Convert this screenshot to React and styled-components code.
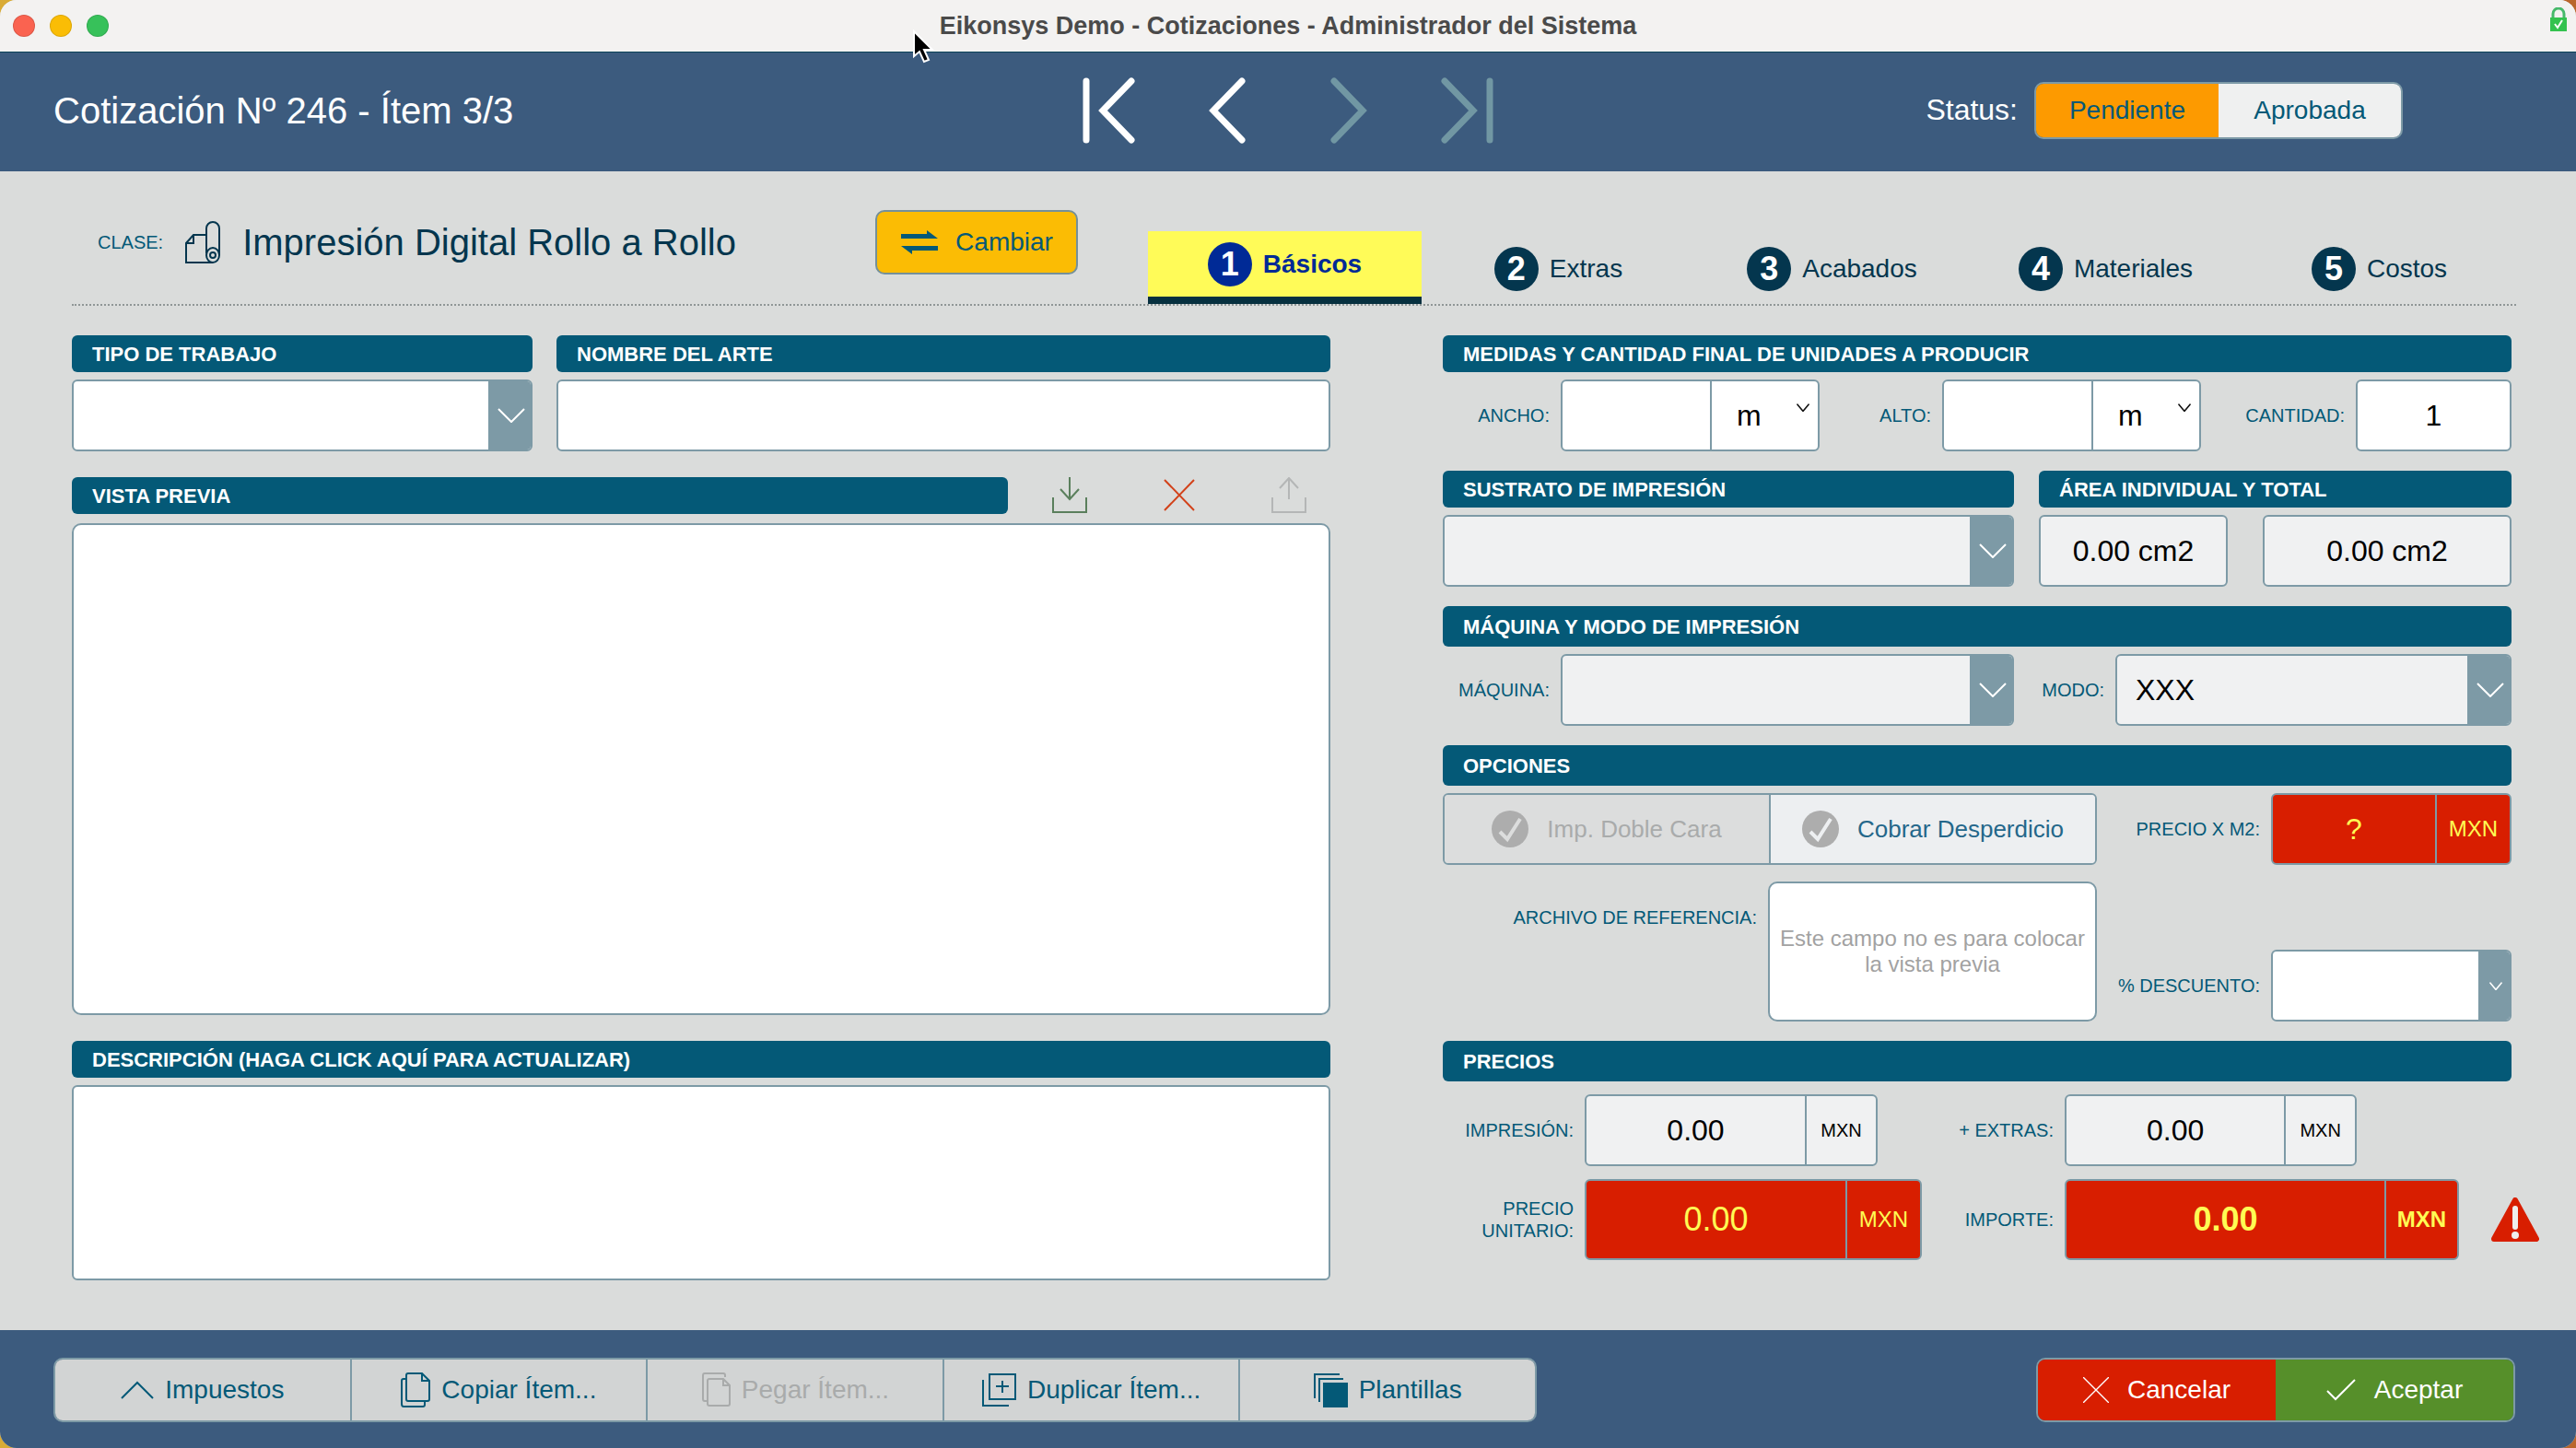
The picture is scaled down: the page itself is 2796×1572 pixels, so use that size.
import React from "react";
import styled, { createGlobalStyle, css } from "styled-components";

const c = {
  navy: "#3c5b7e",
  teal: "#045977",
  ink: "#04364e",
  edge: "#7d9aa6",
  panel: "#dadcdb",
  soft: "#f0f1f2",
  red: "#d81e00",
  lemon: "#fffb54",
  mute: "#a9abab",
};

const GlobalStyle = createGlobalStyle`
  *, *::before, *::after { box-sizing: border-box; }
  body { margin: 0; background: linear-gradient(90deg, #d9ab35, #b9662c); }
  body, button, input, select, textarea {
    font-family: "Liberation Sans", Arial, Helvetica, sans-serif;
  }
  button { padding: 0; cursor: pointer; }
  h1, h2 { margin: 0; font-weight: 400; }
`;

const Window = styled.div`
  display: flex;
  flex-direction: column;
  min-height: 100vh;
  border-radius: 18px;
  overflow: hidden;
  background: ${c.panel};
  color: ${c.teal};
`;

/* ---- Title bar ---- */
const TitleBar = styled.header`
  display: grid;
  grid-template-columns: 1fr auto 1fr;
  align-items: center;
  height: 57px;
  padding: 0 10px;
  background: #f3f2f1;
  border-bottom: 1px solid #0b4257;
`;
const Lights = styled.div`
  display: flex;
  gap: 16px;
  padding-left: 4px;
`;
const Light = styled.button`
  width: 24px;
  height: 24px;
  border: 1px solid rgba(0, 0, 0, 0.12);
  border-radius: 50%;
  background: ${(p) => p.$color};
`;
const WindowTitle = styled.h1`
  font-size: 27px;
  font-weight: 700;
  line-height: 32px;
  color: #4a4a4a;
`;
const Lock = styled.svg`
  justify-self: end;
  align-self: start;
  margin-top: 8px;
`;
const Pointer = styled.svg`
  position: absolute;
  left: 990px;
  top: 32px;
`;

/* ---- Record header ---- */
const RecordBar = styled.div`
  display: grid;
  grid-template-columns: 1fr auto 1fr;
  align-items: center;
  height: 129px;
  padding: 0 188px 4px 58px;
  background: ${c.navy};
  color: #fff;
`;
const RecordTitle = styled.h2`
  font-size: 40px;
  line-height: 48px;
`;
const Pager = styled.nav`
  display: flex;
  align-items: center;
  gap: 70px;
  padding-left: 130px;
`;
const PagerButton = styled.button`
  display: flex;
  justify-content: center;
  width: 60px;
  border: 0;
  background: none;
  color: ${(p) => (p.disabled ? "#7197a3" : "#fff")};
`;
const Status = styled.div`
  display: flex;
  align-items: center;
  justify-content: flex-end;
  gap: 18px;
  font-size: 32px;
`;
const Segments = styled.div`
  display: flex;
  border: 2px solid ${c.edge};
  border-radius: ${(p) => p.$radius || 10}px;
  overflow: hidden;
  flex: ${(p) => p.$flex || "none"};
`;
const Segment = styled.button`
  display: flex;
  flex: ${(p) => p.$flex || "1 1 0"};
  align-items: center;
  justify-content: center;
  gap: ${(p) => p.$gap || 12}px;
  width: ${(p) => (p.$width ? p.$width + "px" : "auto")};
  height: ${(p) => p.$height}px;
  border: 0;
  font-size: ${(p) => p.$size || 28}px;
  white-space: nowrap;
  background: ${(p) => p.$bg};
  color: ${(p) => p.$color || c.teal};
  &:not(:first-child) {
    border-left: ${(p) => (p.$divider ? `2px solid ${c.edge}` : "0")};
  }
`;

/* ---- Class row and tabs ---- */
const Main = styled.main`
  display: flex;
  flex: 1;
  flex-direction: column;
  padding: 0 65px 54px 78px;
`;
const ClassRow = styled.div`
  display: grid;
  grid-template-columns: 1168fr 1485fr;
  align-items: end;
  height: 146px;
  border-bottom: 2px dotted #8f9696;
`;
const ClassInfo = styled.div`
  display: flex;
  align-items: center;
  height: 70px;
  margin-bottom: 32px;
  padding: 0 76px 0 28px;
`;
const ClassLabel = styled.span`
  font-size: 20px;
`;
const ClassIcon = styled.svg`
  margin: 0 24px;
`;
const ClassName = styled.h2`
  font-size: 40px;
  line-height: 48px;
  color: ${c.ink};
  white-space: nowrap;
`;
const ChangeButton = styled.button`
  display: flex;
  align-items: center;
  justify-content: center;
  gap: 18px;
  width: 220px;
  height: 70px;
  margin-left: auto;
  border: 2px solid #74909a;
  border-radius: 10px;
  background: #fbbc04;
  color: ${c.teal};
  font-size: 28px;
`;
const Tabs = styled.nav`
  display: flex;
`;
const Tab = styled.button`
  display: flex;
  flex: 1 1 0;
  align-items: center;
  justify-content: center;
  gap: 12px;
  height: ${(p) => (p.$active ? 79 : 76)}px;
  align-self: flex-end;
  border: 0;
  border-bottom: ${(p) => (p.$active ? `8px solid #06303f` : "0")};
  background: ${(p) => (p.$active ? "#fffb58" : "none")};
  color: ${(p) => (p.$active ? "#002a96" : c.ink)};
  font-size: 28px;
  font-weight: ${(p) => (p.$active ? 700 : 400)};
`;
const Step = styled.span`
  width: 48px;
  height: 48px;
  border-radius: 50%;
  background: ${(p) => (p.$active ? "#002a96" : c.ink)};
  color: #fff;
  font-size: 36px;
  font-weight: 700;
  line-height: 48px;
  text-align: center;
`;

/* ---- Form ---- */
const Form = styled.form`
  display: grid;
  flex: 1;
  grid-template-columns: 1366fr 1160fr;
  column-gap: 122px;
  padding: 32px 5px 0 0;
`;
const Column = styled.div`
  display: flex;
  flex-direction: column;
  min-width: 0;
  gap: ${(p) => p.$gap}px;
`;
const Block = styled.section`
  display: flex;
  flex-direction: column;
  gap: ${(p) => p.$gap || 8}px;
  flex: ${(p) => p.$flex || "none"};
  min-width: 0;
`;
const Row = styled.div`
  display: grid;
  grid-template-columns: ${(p) => p.$cols};
  column-gap: ${(p) => p.$gap || 0}px;
  margin-right: ${(p) => p.$outdent ? "-30px" : "0"};
`;
const Heading = styled.label`
  display: block;
  padding: 2px 22px 0;
  border-radius: 6px;
  background: ${c.teal};
  color: #fff;
  font-size: 22px;
  font-weight: 700;
  line-height: ${(p) => (p.$tall ? 42 : 38)}px;
  white-space: nowrap;
`;
const Label = styled.label`
  display: flex;
  align-items: center;
  justify-content: flex-end;
  align-self: ${(p) => p.$align || "center"};
  height: 78px;
  padding-right: 12px;
  font-size: 20px;
  line-height: 24px;
  text-align: right;
`;
const tones = {
  white: css`background: #fff; color: #000;`,
  soft: css`background: ${c.soft}; color: #000;`,
  red: css`background: ${c.red}; color: ${c.lemon};`,
};
const Box = styled.div`
  display: grid;
  grid-template-columns: ${(p) => p.$cols || "minmax(0, 1fr)"};
  align-self: ${(p) => p.$align || "stretch"};
  height: ${(p) => p.$height || 78}px;
  border: 2px solid ${c.edge};
  border-radius: 6px;
  overflow: hidden;
  ${(p) => tones[p.$tone || "white"]}
`;
const Input = styled.input`
  width: 100%;
  min-width: 0;
  padding: 0 20px;
  border: 0;
  background: transparent;
  color: inherit;
  font-size: ${(p) => p.$size || 32}px;
  font-weight: ${(p) => (p.$bold ? 700 : 400)};
  text-align: center;
`;
const Unit = styled.span`
  display: flex;
  align-items: center;
  justify-content: center;
  border-left: 2px solid ${c.edge};
  font-size: ${(p) => p.$size || 20}px;
  font-weight: ${(p) => (p.$bold ? 700 : 400)};
`;
const Select = styled.select`
  grid-area: 1 / 1 / 2 / -1;
  min-width: 0;
  padding: 0 20px;
  border: 0;
  background: transparent;
  color: inherit;
  appearance: none;
  font-size: 32px;
`;
const Arrow = styled.span`
  display: flex;
  grid-area: 1 / 2 / 2 / 3;
  align-items: center;
  justify-content: center;
  padding-left: 4px;
  background: ${c.edge};
  color: #fff;
  pointer-events: none;
`;
const UnitPicker = styled.div`
  display: grid;
  grid-template-columns: minmax(0, 1fr) 23px;
  border-left: 2px solid ${c.edge};
  select { padding-left: 27px; }
  svg {
    grid-area: 1 / 2 / 2 / 3;
    margin-top: 24px;
    pointer-events: none;
  }
`;
const Area = styled.textarea`
  flex: ${(p) => p.$flex || "none"};
  height: ${(p) => (p.$height ? p.$height + "px" : "auto")};
  min-height: 200px;
  padding: 20px;
  border: 2px solid ${c.edge};
  border-radius: ${(p) => p.$radius}px;
  background: #fff;
  font-size: 32px;
  resize: none;
`;
const PreviewBar = styled.div`
  display: grid;
  grid-template-columns: 1016fr 350fr;
`;
const PreviewTools = styled.div`
  display: flex;
  justify-content: space-between;
  padding: 0 26px 0 48px;
`;
const Tool = styled.button`
  width: 38px;
  height: 40px;
  border: 0;
  background: none;
  color: ${(p) => p.$color};
`;
const DropZone = styled.button`
  height: 152px;
  border: 2px solid ${c.edge};
  border-radius: 10px;
  background: #fff;
  color: #a2a2a2;
  font-size: 24px;
  line-height: 28px;
`;
const Warning = styled.svg`
  align-self: center;
  justify-self: end;
`;

/* ---- Footer ---- */
const Footer = styled.footer`
  display: flex;
  align-items: center;
  justify-content: space-between;
  height: 128px;
  padding: 2px 66px 0 58px;
  background: ${c.navy};
`;

const Chevron = ({ small, dark }) => (
  <svg width={small ? 14 : 30} height={small ? 9 : 16} viewBox="0 0 30 16" preserveAspectRatio="none" fill="none"
    stroke={dark ? "#111" : "currentColor"} strokeWidth={small ? 3 : 2}>
    <path d="M1 1 15 15 29 1" />
  </svg>
);

const PagerIcon = ({ bar, flip }) => (
  <svg width="60" height="74" viewBox="0 0 60 74" fill="none" stroke="currentColor" strokeWidth="7"
    strokeLinecap="round" transform={flip ? "scale(-1 1)" : undefined}>
    {bar && <path d="M6 5V69" />}
    <path d={bar ? "M55 5 24 37 55 69" : "M45 5 14 37 45 69"} />
  </svg>
);

const CheckDisc = ({ mark }) => (
  <svg width="40" height="40" viewBox="0 0 40 40" fill="none" aria-hidden="true">
    <circle cx="20" cy="20" r="20" fill="#adadad" />
    <path d="M9 23 17 31 31 9" stroke={mark} strokeWidth="4" />
  </svg>
);

const Pages = ({ paste }) => (
  <svg width="32" height="38" viewBox="0 0 32 38" fill="none" stroke="currentColor" strokeWidth="2" aria-hidden="true">
    {paste ? (
      <>
        <path d="M6 31H4Q2 31 2 29V3Q2 1 4 1H24Q26 1 26 3V5" />
        <path d="M24 7H9Q7 7 7 9V34Q7 36 9 36H29Q31 36 31 34V14Z M24 7V14H31" />
      </>
    ) : (
      <>
        <path d="M23 1H8Q6 1 6 3V29Q6 31 8 31H29Q31 31 31 29V9Z M23 1V9H31" />
        <path d="M6 7H3Q1 7 1 9V34Q1 37 3 37H24Q26 37 26 35V31" />
      </>
    )}
  </svg>
);

const PickList = ({ id, tone, value, narrow, align, label }) => (
  <Box $tone={tone} $align={align} $cols={`minmax(0, 1fr) ${narrow ? 34 : 46}px`}>
    <Select id={id} aria-label={label} defaultValue={value || ""}>
      <option value={value || ""}>{value || ""}</option>
    </Select>
    <Arrow><Chevron small={narrow} /></Arrow>
  </Box>
);

const Measure = ({ id, label }) => (
  <Box $cols="minmax(0, 160fr) minmax(0, 117fr)">
    <Input id={id} />
    <UnitPicker>
      <Select aria-label={`Unidad de ${label}`} defaultValue="m"><option>m</option></Select>
      <Chevron small dark />
    </UnitPicker>
  </Box>
);

const Money = ({ id, value, tone = "soft", cols, height, size, unitSize, bold }) => (
  <Box $tone={tone} $cols={cols} $height={height}>
    <Input id={id} readOnly defaultValue={value} $size={size} $bold={bold} />
    <Unit $size={unitSize} $bold={bold}>MXN</Unit>
  </Box>
);

const tabs = ["Básicos", "Extras", "Acabados", "Materiales", "Costos"];

export default function App() {
  return (
    <Window>
      <GlobalStyle />
      <TitleBar>
        <Lights>
          <Light $color="#fa6350" aria-label="Cerrar" />
          <Light $color="#fabd05" aria-label="Minimizar" />
          <Light $color="#37c15a" aria-label="Ampliar" />
        </Lights>
        <WindowTitle>Eikonsys Demo - Cotizaciones - Administrador del Sistema</WindowTitle>
        <Lock width="18" height="26" viewBox="0 0 18 26" fill="none" aria-hidden="true">
          <path d="M3 12V7a6 6 0 0 1 12 0v5" stroke="#46b96a" strokeWidth="3" />
          <path d="M0 11H18V26H0Z" fill="#34c24f" />
          <path d="M5 18 8 22 13 14" stroke="#fff" strokeWidth="2" />
        </Lock>
      </TitleBar>

      <RecordBar>
        <RecordTitle>Cotización Nº 246 - Ítem 3/3</RecordTitle>
        <Pager>
          <PagerButton aria-label="Primero"><PagerIcon bar /></PagerButton>
          <PagerButton aria-label="Anterior"><PagerIcon /></PagerButton>
          <PagerButton aria-label="Siguiente" disabled><PagerIcon flip /></PagerButton>
          <PagerButton aria-label="Último" disabled><PagerIcon bar flip /></PagerButton>
        </Pager>
        <Status>
          <span>Status:</span>
          <Segments>
            <Segment $width={198} $flex="none" $height={58} $bg="#fd9a00">Pendiente</Segment>
            <Segment $width={198} $flex="none" $height={58} $bg="#eff0f0">Aprobada</Segment>
          </Segments>
        </Status>
      </RecordBar>

      <Main>
        <ClassRow>
          <ClassInfo>
            <ClassLabel>CLASE:</ClassLabel>
            <ClassIcon width="38" height="46" viewBox="0 0 38 46" fill="none" stroke={c.ink} strokeWidth="2" aria-hidden="true">
              <path d="M23 15H9L1 24V45H30" />
              <path d="M9 15V24H1" />
              <path d="M23 35V8a7 7 0 0 1 14 0V37" />
              <ellipse cx="30" cy="37" rx="7" ry="8" />
              <ellipse cx="30" cy="37" rx="3" ry="3" />
            </ClassIcon>
            <ClassName>Impresión Digital Rollo a Rollo</ClassName>
            <ChangeButton>
              <svg width="42" height="28" viewBox="0 0 42 28" fill={c.teal} aria-hidden="true">
                <path d="M1 5H29V1L41 10H1Z" />
                <path d="M41 23H13V27L1 18H41Z" />
              </svg>
              Cambiar
            </ChangeButton>
          </ClassInfo>
          <Tabs>
            {tabs.map((name, i) => (
              <Tab key={name} $active={i === 0}>
                <Step $active={i === 0}>{i + 1}</Step>
                {name}
              </Tab>
            ))}
          </Tabs>
        </ClassRow>

        <Form onSubmit={(e) => e.preventDefault()}>
          <Column $gap={28}>
            <Row $cols="500fr 840fr" $gap={26}>
              <Block>
                <Heading htmlFor="tipo">TIPO DE TRABAJO</Heading>
                <PickList id="tipo" />
              </Block>
              <Block>
                <Heading htmlFor="arte">NOMBRE DEL ARTE</Heading>
                <Box><Input id="arte" /></Box>
              </Block>
            </Row>
            <Block $gap={10} $flex="1">
              <PreviewBar>
                <Heading htmlFor="vista">VISTA PREVIA</Heading>
                <PreviewTools>
                  <Tool type="button" aria-label="Importar" $color="#5a7f5c">
                    <svg width="38" height="40" viewBox="0 0 38 40" fill="none" stroke="currentColor" strokeWidth="2">
                      <path d="M19 0V24M9 13 19 24 29 13" />
                      <path d="M1 22V38H37V22" />
                    </svg>
                  </Tool>
                  <Tool type="button" aria-label="Borrar" $color="#d2421a">
                    <svg width="38" height="40" viewBox="0 0 38 40" fill="none" stroke="currentColor" strokeWidth="2">
                      <path d="M3 3 35 36M35 3 3 36" />
                    </svg>
                  </Tool>
                  <Tool type="button" aria-label="Exportar" $color="#b4b6b6">
                    <svg width="38" height="40" viewBox="0 0 38 40" fill="none" stroke="currentColor" strokeWidth="2">
                      <path d="M19 24V1M9 12 19 1 29 12" />
                      <path d="M1 22V38H37V22" />
                    </svg>
                  </Tool>
                </PreviewTools>
              </PreviewBar>
              <Area id="vista" $flex="1" $radius={10} />
            </Block>
            <Block>
              <Heading htmlFor="descripcion">DESCRIPCIÓN (HAGA CLICK AQUÍ PARA ACTUALIZAR)</Heading>
              <Area id="descripcion" $height={212} $radius={6} />
            </Block>
          </Column>

          <Column $gap={21}>
            <Block>
              <Heading as="h2">MEDIDAS Y CANTIDAD FINAL DE UNIDADES A PRODUCIR</Heading>
              <Row $cols="128px 281fr 133px 281fr 168px 169fr">
                <Label htmlFor="ancho">ANCHO:</Label>
                <Measure id="ancho" label="ancho" />
                <Label htmlFor="alto">ALTO:</Label>
                <Measure id="alto" label="alto" />
                <Label htmlFor="cantidad">CANTIDAD:</Label>
                <Box><Input id="cantidad" defaultValue="1" /></Box>
              </Row>
            </Block>
            <Row $cols="620fr 513fr" $gap={27}>
              <Block>
                <Heading htmlFor="sustrato">SUSTRATO DE IMPRESIÓN</Heading>
                <PickList id="sustrato" tone="soft" />
              </Block>
              <Block>
                <Heading as="h2">ÁREA INDIVIDUAL Y TOTAL</Heading>
                <Row $cols="205fr 270fr" $gap={38}>
                  <Box $tone="soft"><Input aria-label="Área individual" readOnly defaultValue="0.00 cm2" /></Box>
                  <Box $tone="soft"><Input aria-label="Área total" readOnly defaultValue="0.00 cm2" /></Box>
                </Row>
              </Block>
            </Row>
            <Block>
              <Heading as="h2" $tall>MÁQUINA Y MODO DE IMPRESIÓN</Heading>
              <Row $cols="128px 492fr 110px 430fr">
                <Label htmlFor="maquina">MÁQUINA:</Label>
                <PickList id="maquina" tone="soft" />
                <Label htmlFor="modo">MODO:</Label>
                <PickList id="modo" tone="soft" value="XXX" />
              </Row>
            </Block>
            <Block $gap={18}>
              <Block>
                <Heading as="h2" $tall>OPCIONES</Heading>
                <Row $cols="710fr 189px 261fr">
                  <Segments $radius={6}>
                    <Segment type="button" disabled $height={74} $size={26} $gap={20} $bg="#dcdddd" $color={c.mute} $divider>
                      <CheckDisc mark="#dcdddd" />Imp. Doble Cara
                    </Segment>
                    <Segment type="button" $height={74} $size={26} $gap={20} $bg="#edeff1" $color="#24678a" $divider>
                      <CheckDisc mark="#edeff1" />Cobrar Desperdicio
                    </Segment>
                  </Segments>
                  <Label htmlFor="preciom2">PRECIO X M2:</Label>
                  <Money id="preciom2" value="?" tone="red" cols="minmax(0, 176fr) 81fr" size={32} unitSize={24} />
                </Row>
              </Block>
              <Row $cols="353px 357fr 189px 261fr">
                <Label htmlFor="archivo" $align="start">ARCHIVO DE REFERENCIA:</Label>
                <DropZone type="button" id="archivo">Este campo no es para colocar la vista previa</DropZone>
                <Label htmlFor="descuento" $align="end">% DESCUENTO:</Label>
                <PickList id="descuento" narrow align="end" />
              </Row>
            </Block>
            <Block $gap={14}>
              <Heading as="h2" $tall>PRECIOS</Heading>
              <Row $cols="154px 318fr 203px 317fr 168fr">
                <Label htmlFor="impresion">IMPRESIÓN:</Label>
                <Money id="impresion" value="0.00" cols="minmax(0, 237fr) 77fr" />
                <Label htmlFor="extras">+ EXTRAS:</Label>
                <Money id="extras" value="0.00" cols="minmax(0, 237fr) 77fr" />
              </Row>
              <Row $cols="154px 366fr 155px 428fr 87px" $outdent>
                <Label htmlFor="unitario">PRECIO<br />UNITARIO:</Label>
                <Money id="unitario" value="0.00" tone="red" cols="minmax(0, 281fr) 81fr" height={88} size={36} unitSize={24} />
                <Label htmlFor="importe">IMPORTE:</Label>
                <Money id="importe" value="0.00" tone="red" cols="minmax(0, 345fr) 79fr" height={88} size={36} unitSize={24} bold />
                <Warning width="52" height="48" viewBox="0 0 52 48" role="img" aria-label="Advertencia">
                  <path d="M26 3 49 45H3Z" fill={c.red} stroke={c.red} strokeWidth="6" strokeLinejoin="round" />
                  <path d="M26 12V32" stroke="#eee" strokeWidth="6" strokeLinecap="round" />
                  <circle cx="26" cy="41" r="4" fill="#eee" />
                </Warning>
              </Row>
            </Block>
          </Column>
        </Form>
      </Main>

      <Footer>
        <Segments $flex="0 1 1610px">
          <Segment $height={66} $bg="#d2d4d4" $divider>
            <svg width="36" height="20" viewBox="0 0 36 20" fill="none" stroke="currentColor" strokeWidth="2"><path d="M1 19 18 2 35 19" /></svg>
            Impuestos
          </Segment>
          <Segment $height={66} $bg="#d2d4d4" $divider><Pages />Copiar Ítem...</Segment>
          <Segment $height={66} $bg="#d2d4d4" $color={c.mute} disabled $divider><Pages paste />Pegar Ítem...</Segment>
          <Segment $height={66} $bg="#d2d4d4" $divider>
            <svg width="37" height="38" viewBox="0 0 37 38" fill="none" stroke="currentColor" strokeWidth="2">
              <path d="M8 2H36V29H8Z M22 9V22M15 15H29M1 8V36H29" />
            </svg>
            Duplicar Ítem...
          </Segment>
          <Segment $height={66} $bg="#d2d4d4" $divider>
            <svg width="37" height="38" viewBox="0 0 37 38" fill="none" stroke="currentColor" strokeWidth="2">
              <path d="M10 11H37V38H10Z" fill="currentColor" stroke="none" />
              <path d="M1 28V2H28M6 32V7H32" />
            </svg>
            Plantillas
          </Segment>
        </Segments>
        <Segments>
          <Segment $width={258} $flex="none" $height={66} $gap={20} $bg={c.red} $color="#fff">
            <svg width="28" height="28" viewBox="0 0 28 28" fill="none" stroke="currentColor" strokeWidth="1.4"><path d="M0 0 28 28M28 0 0 28" /></svg>
            Cancelar
          </Segment>
          <Segment $width={258} $flex="none" $height={66} $gap={20} $bg="#568f2a" $color="#fff">
            <svg width="32" height="24" viewBox="0 0 32 24" fill="none" stroke="currentColor" strokeWidth="2"><path d="M1 13 10 22 31 1" /></svg>
            Aceptar
          </Segment>
        </Segments>
      </Footer>

      <Pointer width="26" height="38" viewBox="0 0 26 38" aria-hidden="true">
        <path d="M2 2V29L8 24L13 35L18 33L13 22H22Z" fill="#000" stroke="#fff" strokeWidth="2" />
      </Pointer>
    </Window>
  );
}
